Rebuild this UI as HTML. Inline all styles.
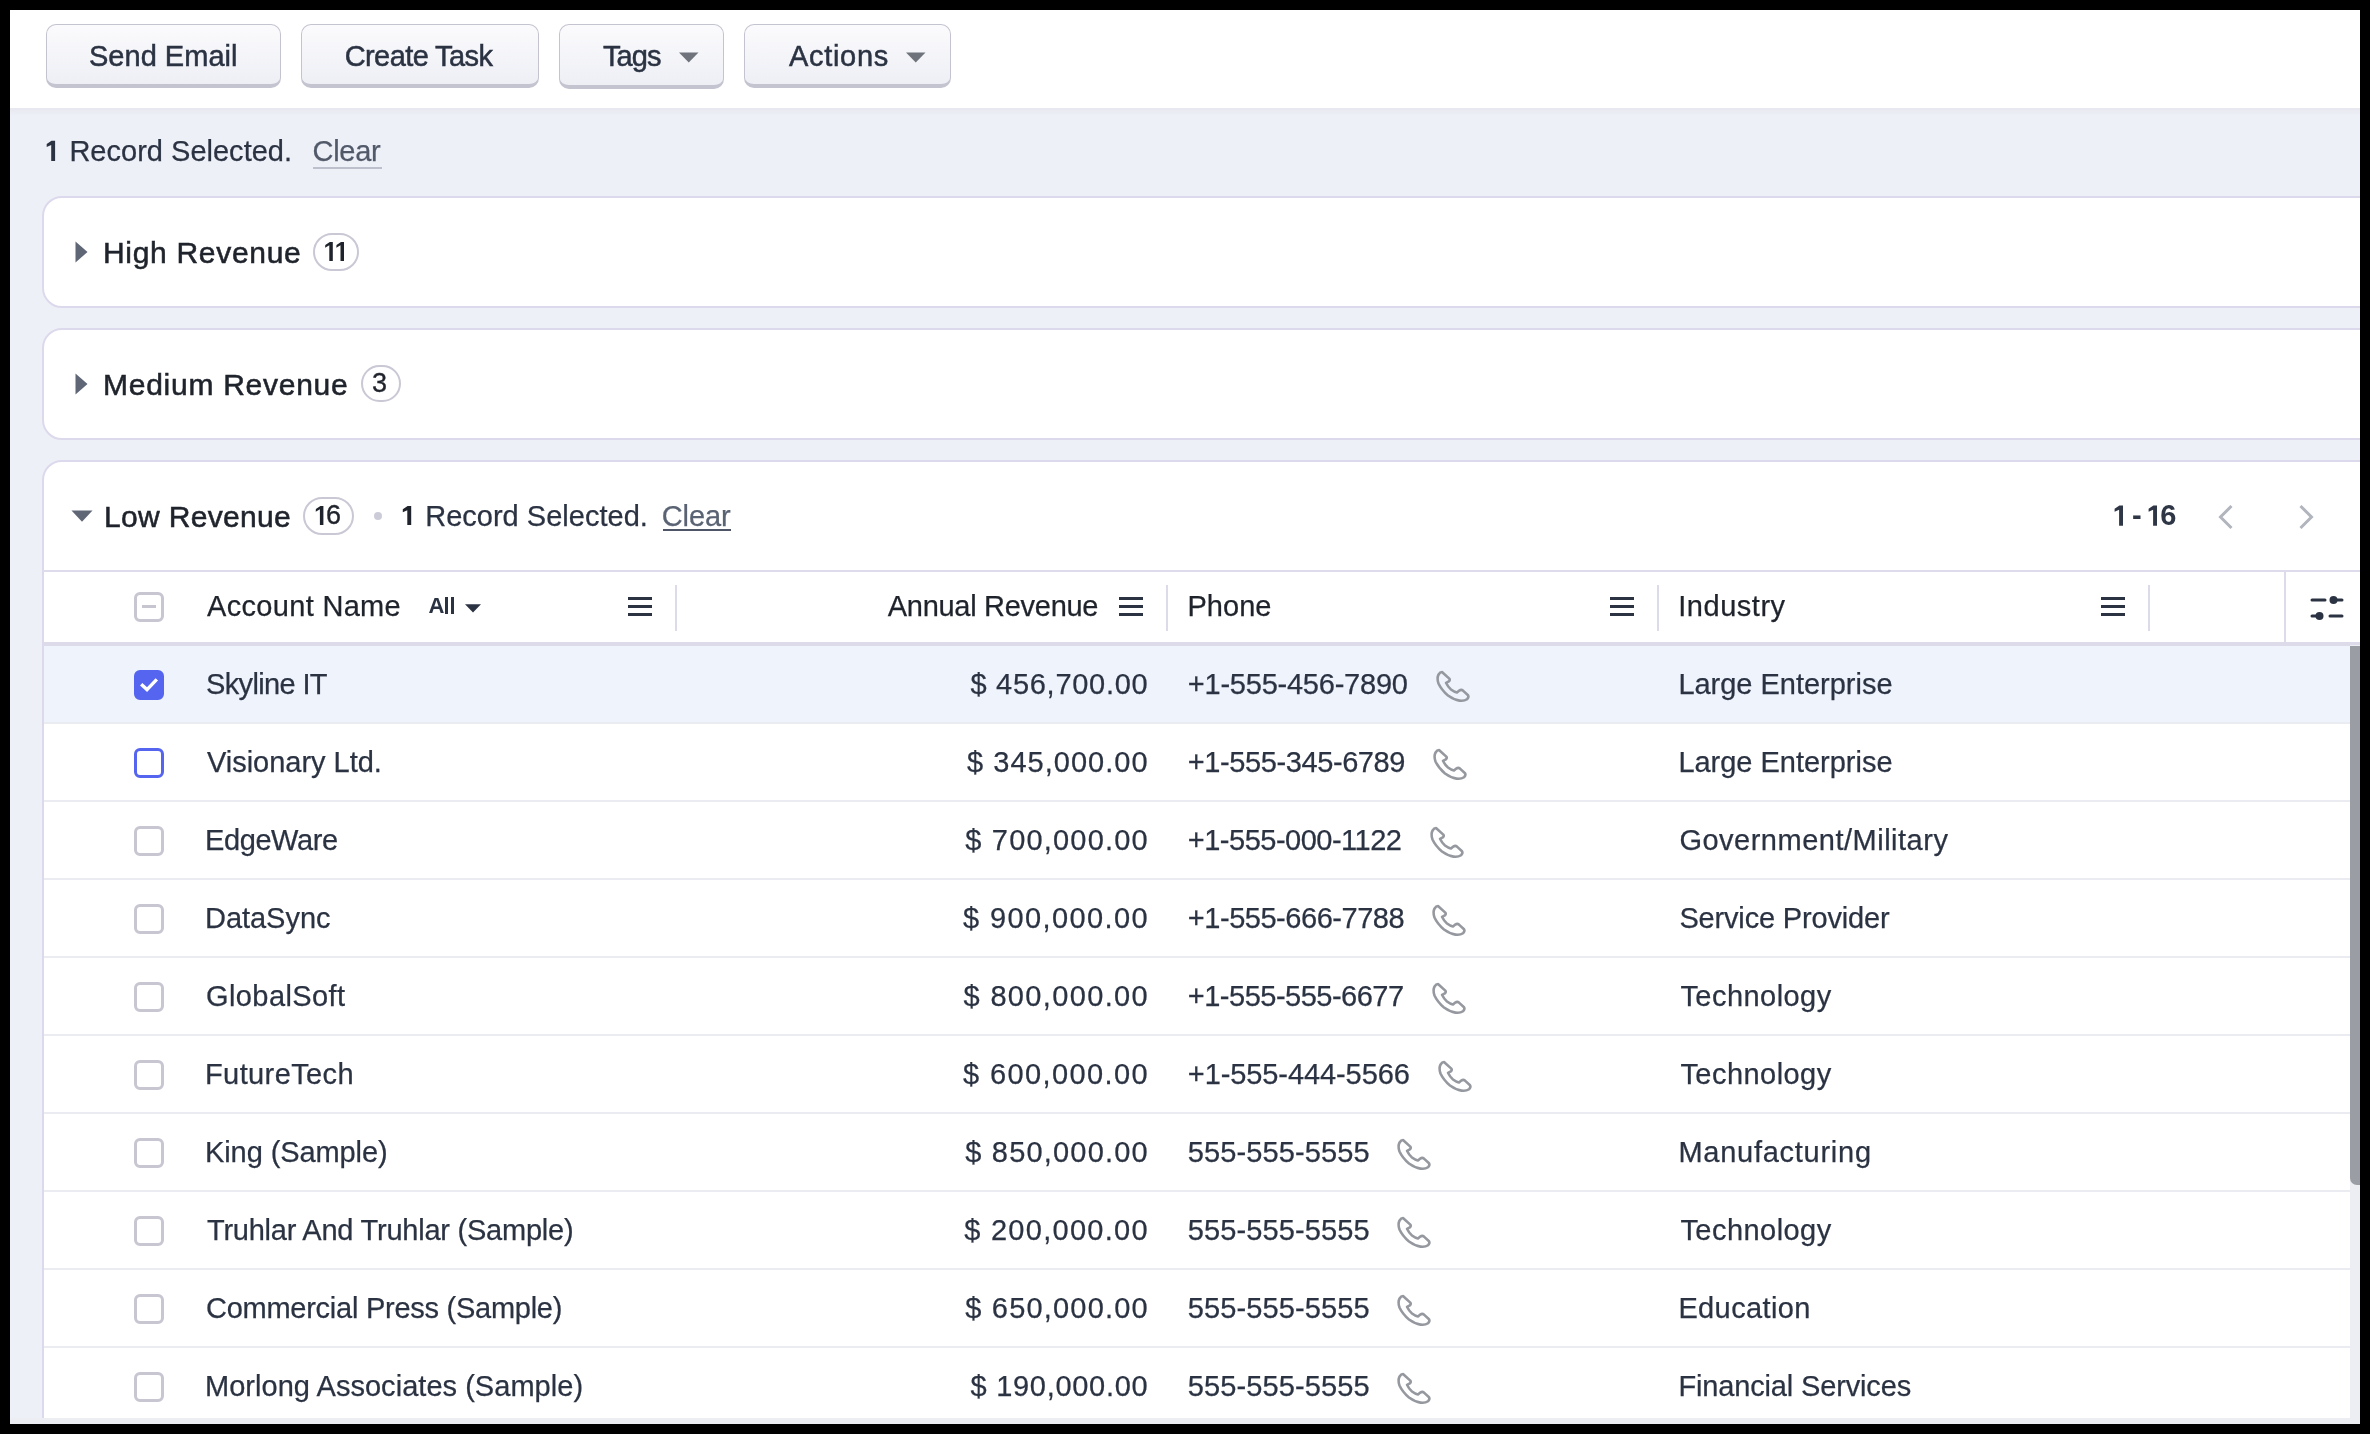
<!DOCTYPE html>
<html><head><meta charset="utf-8"><style>
html,body{margin:0;padding:0;width:2370px;height:1434px;overflow:hidden;background:#000;}
#app{position:absolute;left:10px;top:10px;width:2349.5px;height:1413.5px;background:#eef0f7;overflow:hidden;}
#top{position:absolute;left:0;top:0;width:100%;height:98px;background:#fff;}
#shade{position:absolute;left:0;top:98px;width:100%;height:8px;background:linear-gradient(#e6e7ef,#eef0f7);}
#stage{position:absolute;left:-10px;top:-10px;width:2370px;height:1434px;will-change:transform;}
.t{position:absolute;font-family:"Liberation Sans",sans-serif;line-height:1;white-space:pre;}
.btn{position:absolute;box-sizing:border-box;border:1.6px solid #c3c4cf;border-bottom-width:4px;border-radius:10px;background:linear-gradient(#fbfbfd,#eeeff5);}
.card{position:absolute;left:42px;width:2400px;box-sizing:border-box;border:2px solid #dcd9ec;border-radius:20px;background:#fff;}
.badge{position:absolute;box-sizing:border-box;border:2px solid #c9c8d4;border-radius:20px;}
.ic,.ph{position:absolute;}
.hb{position:absolute;width:24px;height:3px;background:#2b3343;box-shadow:0 8px 0 #2b3343,0 16px 0 #2b3343;}
.row{position:absolute;left:44px;width:2306px;height:76px;border-bottom:2px solid #eaecf2;}
.cb{position:absolute;box-sizing:border-box;width:30px;height:30px;border:3px solid #c7c6d1;border-radius:6px;background:#fff;}
</style></head><body>
<div id="app"><div id="top"></div><div id="shade"></div><div id="stage">
<div class="btn" style="left:46px;top:24px;width:234.5px;height:64px"></div>
<div class="btn" style="left:301.2px;top:24px;width:237.59999999999997px;height:64px"></div>
<div class="btn" style="left:559px;top:24px;width:164.5px;height:65px"></div>
<div class="btn" style="left:744px;top:24px;width:207px;height:64px"></div>
<svg class="ic" style="left:679px;top:52px" width="20" height="11" viewBox="0 0 20 11"><path d="M0 0.5 H19.5 L9.75 10.5 Z" fill="#6f737c"/></svg>
<svg class="ic" style="left:906px;top:52px" width="20" height="11" viewBox="0 0 20 11"><path d="M0 0.5 H19.5 L9.75 10.5 Z" fill="#6f737c"/></svg>
<div style="position:absolute;left:313px;top:167px;width:68.5px;height:2px;background:#bcc0cd"></div>
<div class="card" style="top:196px;height:112px"></div>
<div class="card" style="top:328px;height:112px"></div>
<div class="card" style="top:459.5px;height:2000px"></div>
<svg class="ic" style="left:75px;top:241.3px" width="13" height="22" viewBox="0 0 13 22"><path d="M0.5 0.5 L12.5 11 L0.5 21.5 Z" fill="#5f6676"/></svg>
<svg class="ic" style="left:75px;top:373.3px" width="13" height="22" viewBox="0 0 13 22"><path d="M0.5 0.5 L12.5 11 L0.5 21.5 Z" fill="#5f6676"/></svg>
<div class="badge" style="left:313.2px;top:233.2px;width:45.5px;height:37.400000000000034px"></div>
<svg class="ic" style="left:0;top:0" width="2370" height="1434"><path d="M332.8 242 L332.8 260.9 L329.3 260.9 L329.3 245.3 L325.1 247.8 L325.3 245 L329.8 242 Z" fill="#1f232b"/></svg>
<svg class="ic" style="left:0;top:0" width="2370" height="1434"><path d="M344 242 L344 260.9 L340.5 260.9 L340.5 245.3 L336.3 247.8 L336.5 245 L341 242 Z" fill="#1f232b"/></svg>
<svg class="ic" style="left:0;top:0" width="2370" height="1434"><path d="M323.4 506 L323.4 524.9 L319.9 524.9 L319.9 509.3 L315.7 511.8 L315.9 509 L320.4 506 Z" fill="#1f232b"/></svg>
<svg class="ic" style="left:0;top:0" width="2370" height="1434"><path d="M55.1 140.7 L55.1 161 L51.2 161 L51.2 145.0 L46.7 147.0 L46.7 143.89999999999998 L51.5 140.7 Z" fill="#2b3343"/></svg>
<svg class="ic" style="left:0;top:0" width="2370" height="1434"><path d="M411.2 506 L411.2 525 L407.3 525 L407.3 510.3 L402.8 512.3 L402.8 509.2 L407.59999999999997 506 Z" fill="#1f232b"/></svg>
<svg class="ic" style="left:0;top:0" width="2370" height="1434"><path d="M2123 505.5 L2123 525.7 L2119.1 525.7 L2119.1 509.8 L2114.6 511.8 L2114.6 508.7 L2119.4 505.5 Z" fill="#2f3747"/></svg>
<svg class="ic" style="left:0;top:0" width="2370" height="1434"><path d="M2157 505.5 L2157 525.7 L2153.1 525.7 L2153.1 509.8 L2148.6 511.8 L2148.6 508.7 L2153.4 505.5 Z" fill="#2f3747"/></svg>
<div class="badge" style="left:361.3px;top:365.2px;width:39.39999999999998px;height:37.19999999999999px"></div>
<div class="badge" style="left:303.2px;top:497.1px;width:50.5px;height:37.60000000000002px"></div>
<svg class="ic" style="left:70.5px;top:510px" width="22" height="12" viewBox="0 0 22 12"><path d="M0.5 0.5 H21.5 L11 11.8 Z" fill="#5f6676"/></svg>
<div style="position:absolute;left:373.7px;top:511.8px;width:8px;height:8px;border-radius:50%;background:#cbccd8"></div>
<div style="position:absolute;left:662.5px;top:528.5px;width:68.5px;height:2px;background:#4d5566"></div>
<svg class="ic" style="left:2216px;top:503px" width="20" height="28" viewBox="0 0 20 28"><path d="M15.5 3 L4.5 14 L15.5 25" fill="none" stroke="#b2b5bd" stroke-width="3"/></svg>
<svg class="ic" style="left:2296px;top:503px" width="20" height="28" viewBox="0 0 20 28"><path d="M4.5 3 L15.5 14 L4.5 25" fill="none" stroke="#b2b5bd" stroke-width="3"/></svg>
<div style="position:absolute;left:43px;top:570px;width:2400px;height:2px;background:#dedcec"></div>
<div style="position:absolute;left:43px;top:642px;width:2400px;height:4px;background:#dddbea"></div>
<div class="cb" style="left:134px;top:592px;border-color:#c7c6d1"><div style="position:absolute;left:5px;top:10.4px;width:13.8px;height:2.6px;background:#c6c5d0"></div></div>
<div style="position:absolute;left:445.2px;top:596.5px;width:2.8px;height:17.4px;background:#2b3343"></div><div style="position:absolute;left:451px;top:596.5px;width:2.8px;height:17.4px;background:#2b3343"></div>
<svg class="ic" style="left:465px;top:603.5px" width="16" height="9" viewBox="0 0 16 9"><path d="M0 0.3 H16 L8 8.5 Z" fill="#2b3343"/></svg>
<div class="hb" style="left:628px;top:597.1px"></div>
<div class="hb" style="left:1119px;top:597.1px"></div>
<div class="hb" style="left:1610px;top:597.1px"></div>
<div class="hb" style="left:2101px;top:597.1px"></div>
<div style="position:absolute;left:675px;top:584.5px;width:2px;height:46px;background:#dcdbea"></div>
<div style="position:absolute;left:1166px;top:584.5px;width:2px;height:46px;background:#dcdbea"></div>
<div style="position:absolute;left:1657px;top:584.5px;width:2px;height:46px;background:#dcdbea"></div>
<div style="position:absolute;left:2148px;top:584.5px;width:2px;height:46px;background:#dcdbea"></div>
<div style="position:absolute;left:2284px;top:571px;width:2px;height:72px;background:#dcdbea"></div>
<svg class="ic" style="left:2308px;top:592px" width="40" height="32" viewBox="0 0 40 32"><g stroke="#2b3343" stroke-width="3" stroke-linecap="round"><line x1="4" y1="8" x2="17" y2="8"/><line x1="26" y1="8" x2="34" y2="8"/><line x1="4" y1="24" x2="9" y2="24"/><line x1="22" y1="24" x2="34" y2="24"/></g><circle cx="25.5" cy="8" r="4" fill="#2b3343"/><circle cx="11.5" cy="24" r="4" fill="#2b3343"/></svg>
<div class="row" style="top:646px;background:#eff3fc"></div>
<div class="cb" style="left:134px;top:670px;background:#5565ef;border-color:#5565ef"><svg style="position:absolute;left:0;top:0" width="24" height="24" viewBox="0 0 24 24"><path d="M4.2 11.2 L10 16.6 L19.8 6.4" fill="none" stroke="#fff" stroke-width="3.4" stroke-linecap="butt" stroke-linejoin="miter"/></svg></div>
<div class="row" style="top:724px;background:#ffffff"></div>
<div class="cb" style="left:134px;top:748px;border-color:#5565ef"></div>
<div class="row" style="top:802px;background:#ffffff"></div>
<div class="cb" style="left:134px;top:826px"></div>
<div class="row" style="top:880px;background:#ffffff"></div>
<div class="cb" style="left:134px;top:904px"></div>
<div class="row" style="top:958px;background:#ffffff"></div>
<div class="cb" style="left:134px;top:982px"></div>
<div class="row" style="top:1036px;background:#ffffff"></div>
<div class="cb" style="left:134px;top:1060px"></div>
<div class="row" style="top:1114px;background:#ffffff"></div>
<div class="cb" style="left:134px;top:1138px"></div>
<div class="row" style="top:1192px;background:#ffffff"></div>
<div class="cb" style="left:134px;top:1216px"></div>
<div class="row" style="top:1270px;background:#ffffff"></div>
<div class="cb" style="left:134px;top:1294px"></div>
<div class="row" style="top:1348px;background:#ffffff"></div>
<div class="cb" style="left:134px;top:1372px"></div>
<svg class="ph" style="left:1425.6px;top:660.5px" width="55" height="50" viewBox="0 0 55 50"><path d="M16 11 L23.3 17.6 Q24.4 19 22.8 20.4 L20 21.8 Q22 26 25 28.5 Q28 30.8 31 31.5 L33.3 29.6 Q35.3 28.3 37 29.6 L42 34.2 Q43.2 36.2 41 38.2 Q38 40.3 33.5 39.6 Q28 38.8 22 34.5 Q15.5 29 12.5 22.5 Q10.6 17 12.6 13.5 Q14 11 16 11 Z" fill="none" stroke="#95989f" stroke-width="2.6" stroke-linejoin="round"/></svg>
<svg class="ph" style="left:1423.1px;top:738.5px" width="55" height="50" viewBox="0 0 55 50"><path d="M16 11 L23.3 17.6 Q24.4 19 22.8 20.4 L20 21.8 Q22 26 25 28.5 Q28 30.8 31 31.5 L33.3 29.6 Q35.3 28.3 37 29.6 L42 34.2 Q43.2 36.2 41 38.2 Q38 40.3 33.5 39.6 Q28 38.8 22 34.5 Q15.5 29 12.5 22.5 Q10.6 17 12.6 13.5 Q14 11 16 11 Z" fill="none" stroke="#95989f" stroke-width="2.6" stroke-linejoin="round"/></svg>
<svg class="ph" style="left:1419.6px;top:816.5px" width="55" height="50" viewBox="0 0 55 50"><path d="M16 11 L23.3 17.6 Q24.4 19 22.8 20.4 L20 21.8 Q22 26 25 28.5 Q28 30.8 31 31.5 L33.3 29.6 Q35.3 28.3 37 29.6 L42 34.2 Q43.2 36.2 41 38.2 Q38 40.3 33.5 39.6 Q28 38.8 22 34.5 Q15.5 29 12.5 22.5 Q10.6 17 12.6 13.5 Q14 11 16 11 Z" fill="none" stroke="#95989f" stroke-width="2.6" stroke-linejoin="round"/></svg>
<svg class="ph" style="left:1422.3px;top:894.5px" width="55" height="50" viewBox="0 0 55 50"><path d="M16 11 L23.3 17.6 Q24.4 19 22.8 20.4 L20 21.8 Q22 26 25 28.5 Q28 30.8 31 31.5 L33.3 29.6 Q35.3 28.3 37 29.6 L42 34.2 Q43.2 36.2 41 38.2 Q38 40.3 33.5 39.6 Q28 38.8 22 34.5 Q15.5 29 12.5 22.5 Q10.6 17 12.6 13.5 Q14 11 16 11 Z" fill="none" stroke="#95989f" stroke-width="2.6" stroke-linejoin="round"/></svg>
<svg class="ph" style="left:1421.8px;top:972.5px" width="55" height="50" viewBox="0 0 55 50"><path d="M16 11 L23.3 17.6 Q24.4 19 22.8 20.4 L20 21.8 Q22 26 25 28.5 Q28 30.8 31 31.5 L33.3 29.6 Q35.3 28.3 37 29.6 L42 34.2 Q43.2 36.2 41 38.2 Q38 40.3 33.5 39.6 Q28 38.8 22 34.5 Q15.5 29 12.5 22.5 Q10.6 17 12.6 13.5 Q14 11 16 11 Z" fill="none" stroke="#95989f" stroke-width="2.6" stroke-linejoin="round"/></svg>
<svg class="ph" style="left:1427.5px;top:1050.5px" width="55" height="50" viewBox="0 0 55 50"><path d="M16 11 L23.3 17.6 Q24.4 19 22.8 20.4 L20 21.8 Q22 26 25 28.5 Q28 30.8 31 31.5 L33.3 29.6 Q35.3 28.3 37 29.6 L42 34.2 Q43.2 36.2 41 38.2 Q38 40.3 33.5 39.6 Q28 38.8 22 34.5 Q15.5 29 12.5 22.5 Q10.6 17 12.6 13.5 Q14 11 16 11 Z" fill="none" stroke="#95989f" stroke-width="2.6" stroke-linejoin="round"/></svg>
<svg class="ph" style="left:1387.4px;top:1128.5px" width="55" height="50" viewBox="0 0 55 50"><path d="M16 11 L23.3 17.6 Q24.4 19 22.8 20.4 L20 21.8 Q22 26 25 28.5 Q28 30.8 31 31.5 L33.3 29.6 Q35.3 28.3 37 29.6 L42 34.2 Q43.2 36.2 41 38.2 Q38 40.3 33.5 39.6 Q28 38.8 22 34.5 Q15.5 29 12.5 22.5 Q10.6 17 12.6 13.5 Q14 11 16 11 Z" fill="none" stroke="#95989f" stroke-width="2.6" stroke-linejoin="round"/></svg>
<svg class="ph" style="left:1387.4px;top:1206.5px" width="55" height="50" viewBox="0 0 55 50"><path d="M16 11 L23.3 17.6 Q24.4 19 22.8 20.4 L20 21.8 Q22 26 25 28.5 Q28 30.8 31 31.5 L33.3 29.6 Q35.3 28.3 37 29.6 L42 34.2 Q43.2 36.2 41 38.2 Q38 40.3 33.5 39.6 Q28 38.8 22 34.5 Q15.5 29 12.5 22.5 Q10.6 17 12.6 13.5 Q14 11 16 11 Z" fill="none" stroke="#95989f" stroke-width="2.6" stroke-linejoin="round"/></svg>
<svg class="ph" style="left:1387.4px;top:1284.5px" width="55" height="50" viewBox="0 0 55 50"><path d="M16 11 L23.3 17.6 Q24.4 19 22.8 20.4 L20 21.8 Q22 26 25 28.5 Q28 30.8 31 31.5 L33.3 29.6 Q35.3 28.3 37 29.6 L42 34.2 Q43.2 36.2 41 38.2 Q38 40.3 33.5 39.6 Q28 38.8 22 34.5 Q15.5 29 12.5 22.5 Q10.6 17 12.6 13.5 Q14 11 16 11 Z" fill="none" stroke="#95989f" stroke-width="2.6" stroke-linejoin="round"/></svg>
<svg class="ph" style="left:1387.4px;top:1362.5px" width="55" height="50" viewBox="0 0 55 50"><path d="M16 11 L23.3 17.6 Q24.4 19 22.8 20.4 L20 21.8 Q22 26 25 28.5 Q28 30.8 31 31.5 L33.3 29.6 Q35.3 28.3 37 29.6 L42 34.2 Q43.2 36.2 41 38.2 Q38 40.3 33.5 39.6 Q28 38.8 22 34.5 Q15.5 29 12.5 22.5 Q10.6 17 12.6 13.5 Q14 11 16 11 Z" fill="none" stroke="#95989f" stroke-width="2.6" stroke-linejoin="round"/></svg>
<div style="position:absolute;left:2350px;top:645px;width:9.5px;height:780px;background:#eceef4"></div>
<div style="position:absolute;left:2350px;top:645.5px;width:9.5px;height:539px;background:#9a9da3;border-bottom-left-radius:7px"></div>
<div style="position:absolute;left:10px;top:1418px;width:2350px;height:6px;background:#eceef4"></div>
<span class="t" style="left:89.00px;top:41.75px;font-size:29px;font-weight:400;color:#2b3343;letter-spacing:0.016px;-webkit-text-stroke:0.5px #2b3343;">Send Email</span>
<span class="t" style="left:344.70px;top:41.75px;font-size:29px;font-weight:400;color:#2b3343;letter-spacing:-0.593px;-webkit-text-stroke:0.5px #2b3343;">Create Task</span>
<span class="t" style="left:603.00px;top:41.75px;font-size:29px;font-weight:400;color:#2b3343;letter-spacing:-0.919px;-webkit-text-stroke:0.5px #2b3343;">Tags</span>
<span class="t" style="left:789.00px;top:41.75px;font-size:29px;font-weight:400;color:#2b3343;letter-spacing:0.683px;-webkit-text-stroke:0.5px #2b3343;">Actions</span>
<span class="t" style="left:69.40px;top:136.65px;font-size:29px;font-weight:400;color:#2b3343;letter-spacing:0.013px;-webkit-text-stroke:0.25px #2b3343;">Record Selected.</span>
<span class="t" style="left:312.50px;top:136.65px;font-size:29px;font-weight:400;color:#525a6a;letter-spacing:-0.286px;-webkit-text-stroke:0.25px #525a6a;">Clear</span>
<span class="t" style="left:103.00px;top:238.00px;font-size:30px;font-weight:400;color:#1f232b;letter-spacing:0.688px;-webkit-text-stroke:0.55px #1f232b;">High Revenue</span>
<span class="t" style="left:103.00px;top:370.00px;font-size:30px;font-weight:400;color:#1f232b;letter-spacing:0.736px;-webkit-text-stroke:0.55px #1f232b;">Medium Revenue</span>
<span class="t" style="left:372.10px;top:370.14px;font-size:27px;font-weight:400;color:#1f232b;letter-spacing:0.000px;-webkit-text-stroke:0.35px #1f232b;">3</span>
<span class="t" style="left:104.00px;top:502.21px;font-size:30px;font-weight:400;color:#1f232b;letter-spacing:0.323px;-webkit-text-stroke:0.55px #1f232b;">Low Revenue</span>
<span class="t" style="left:326.00px;top:502.04px;font-size:27px;font-weight:400;color:#1f232b;letter-spacing:0.000px;-webkit-text-stroke:0.35px #1f232b;">6</span>
<span class="t" style="left:425.20px;top:501.75px;font-size:29px;font-weight:400;color:#2b3343;letter-spacing:0.013px;-webkit-text-stroke:0.25px #2b3343;">Record Selected.</span>
<span class="t" style="left:661.70px;top:501.75px;font-size:29px;font-weight:400;color:#5a6373;letter-spacing:-0.086px;-webkit-text-stroke:0.25px #5a6373;">Clear</span>
<span class="t" style="left:2132.00px;top:501.15px;font-size:29px;font-weight:700;color:#2f3747;letter-spacing:0.000px;">-</span>
<span class="t" style="left:2160.20px;top:501.15px;font-size:29px;font-weight:700;color:#2f3747;letter-spacing:0.000px;">6</span>
<span class="t" style="left:207.00px;top:592.45px;font-size:29px;font-weight:400;color:#1f232b;letter-spacing:0.321px;-webkit-text-stroke:0.25px #1f232b;">Account Name</span>
<span class="t" style="left:428.40px;top:595.28px;font-size:22px;font-weight:700;color:#2b3343;letter-spacing:0.000px;">A</span>
<span class="t" style="left:887.80px;top:592.45px;font-size:29px;font-weight:400;color:#1f232b;letter-spacing:-0.293px;-webkit-text-stroke:0.25px #1f232b;">Annual Revenue</span>
<span class="t" style="left:1187.50px;top:592.45px;font-size:29px;font-weight:400;color:#1f232b;letter-spacing:0.018px;-webkit-text-stroke:0.25px #1f232b;">Phone</span>
<span class="t" style="left:1678.30px;top:592.45px;font-size:29px;font-weight:400;color:#1f232b;letter-spacing:0.520px;-webkit-text-stroke:0.25px #1f232b;">Industry</span>
<span class="t" style="left:206.00px;top:669.75px;font-size:29px;font-weight:400;color:#2b3343;letter-spacing:-0.644px;-webkit-text-stroke:0.25px #2b3343;">Skyline IT</span>
<span class="t" style="left:970.50px;top:669.75px;font-size:29px;font-weight:400;color:#2b3343;letter-spacing:0.709px;-webkit-text-stroke:0.25px #2b3343;">$ 456,700.00</span>
<span class="t" style="left:1187.80px;top:669.75px;font-size:29px;font-weight:400;color:#2b3343;letter-spacing:-0.228px;-webkit-text-stroke:0.25px #2b3343;">+1-555-456-7890</span>
<span class="t" style="left:1678.40px;top:669.75px;font-size:29px;font-weight:400;color:#2b3343;letter-spacing:-0.018px;-webkit-text-stroke:0.25px #2b3343;">Large Enterprise</span>
<span class="t" style="left:207.00px;top:747.75px;font-size:29px;font-weight:400;color:#2b3343;letter-spacing:-0.024px;-webkit-text-stroke:0.25px #2b3343;">Visionary Ltd.</span>
<span class="t" style="left:967.00px;top:747.75px;font-size:29px;font-weight:400;color:#2b3343;letter-spacing:1.027px;-webkit-text-stroke:0.25px #2b3343;">$ 345,000.00</span>
<span class="t" style="left:1187.80px;top:747.75px;font-size:29px;font-weight:400;color:#2b3343;letter-spacing:-0.407px;-webkit-text-stroke:0.25px #2b3343;">+1-555-345-6789</span>
<span class="t" style="left:1678.40px;top:747.75px;font-size:29px;font-weight:400;color:#2b3343;letter-spacing:-0.018px;-webkit-text-stroke:0.25px #2b3343;">Large Enterprise</span>
<span class="t" style="left:205.00px;top:825.75px;font-size:29px;font-weight:400;color:#2b3343;letter-spacing:-0.401px;-webkit-text-stroke:0.25px #2b3343;">EdgeWare</span>
<span class="t" style="left:965.30px;top:825.75px;font-size:29px;font-weight:400;color:#2b3343;letter-spacing:1.182px;-webkit-text-stroke:0.25px #2b3343;">$ 700,000.00</span>
<span class="t" style="left:1187.80px;top:825.75px;font-size:29px;font-weight:400;color:#2b3343;letter-spacing:-0.503px;-webkit-text-stroke:0.25px #2b3343;">+1-555-000-1122</span>
<span class="t" style="left:1679.40px;top:825.75px;font-size:29px;font-weight:400;color:#2b3343;letter-spacing:0.502px;-webkit-text-stroke:0.25px #2b3343;">Government/Military</span>
<span class="t" style="left:205.00px;top:903.75px;font-size:29px;font-weight:400;color:#2b3343;letter-spacing:-0.033px;-webkit-text-stroke:0.25px #2b3343;">DataSync</span>
<span class="t" style="left:963.10px;top:903.75px;font-size:29px;font-weight:400;color:#2b3343;letter-spacing:1.382px;-webkit-text-stroke:0.25px #2b3343;">$ 900,000.00</span>
<span class="t" style="left:1187.80px;top:903.75px;font-size:29px;font-weight:400;color:#2b3343;letter-spacing:-0.464px;-webkit-text-stroke:0.25px #2b3343;">+1-555-666-7788</span>
<span class="t" style="left:1679.40px;top:903.75px;font-size:29px;font-weight:400;color:#2b3343;letter-spacing:-0.166px;-webkit-text-stroke:0.25px #2b3343;">Service Provider</span>
<span class="t" style="left:206.00px;top:981.75px;font-size:29px;font-weight:400;color:#2b3343;letter-spacing:0.405px;-webkit-text-stroke:0.25px #2b3343;">GlobalSoft</span>
<span class="t" style="left:963.50px;top:981.75px;font-size:29px;font-weight:400;color:#2b3343;letter-spacing:1.346px;-webkit-text-stroke:0.25px #2b3343;">$ 800,000.00</span>
<span class="t" style="left:1187.80px;top:981.75px;font-size:29px;font-weight:400;color:#2b3343;letter-spacing:-0.499px;-webkit-text-stroke:0.25px #2b3343;">+1-555-555-6677</span>
<span class="t" style="left:1680.40px;top:981.75px;font-size:29px;font-weight:400;color:#2b3343;letter-spacing:0.454px;-webkit-text-stroke:0.25px #2b3343;">Technology</span>
<span class="t" style="left:205.00px;top:1059.75px;font-size:29px;font-weight:400;color:#2b3343;letter-spacing:0.395px;-webkit-text-stroke:0.25px #2b3343;">FutureTech</span>
<span class="t" style="left:963.10px;top:1059.75px;font-size:29px;font-weight:400;color:#2b3343;letter-spacing:1.382px;-webkit-text-stroke:0.25px #2b3343;">$ 600,000.00</span>
<span class="t" style="left:1187.80px;top:1059.75px;font-size:29px;font-weight:400;color:#2b3343;letter-spacing:-0.092px;-webkit-text-stroke:0.25px #2b3343;">+1-555-444-5566</span>
<span class="t" style="left:1680.40px;top:1059.75px;font-size:29px;font-weight:400;color:#2b3343;letter-spacing:0.454px;-webkit-text-stroke:0.25px #2b3343;">Technology</span>
<span class="t" style="left:205.00px;top:1137.75px;font-size:29px;font-weight:400;color:#2b3343;letter-spacing:-0.090px;-webkit-text-stroke:0.25px #2b3343;">King (Sample)</span>
<span class="t" style="left:965.30px;top:1137.75px;font-size:29px;font-weight:400;color:#2b3343;letter-spacing:1.182px;-webkit-text-stroke:0.25px #2b3343;">$ 850,000.00</span>
<span class="t" style="left:1187.80px;top:1137.75px;font-size:29px;font-weight:400;color:#2b3343;letter-spacing:0.121px;-webkit-text-stroke:0.25px #2b3343;">555-555-5555</span>
<span class="t" style="left:1678.40px;top:1137.75px;font-size:29px;font-weight:400;color:#2b3343;letter-spacing:0.738px;-webkit-text-stroke:0.25px #2b3343;">Manufacturing</span>
<span class="t" style="left:207.00px;top:1215.75px;font-size:29px;font-weight:400;color:#2b3343;letter-spacing:-0.234px;-webkit-text-stroke:0.25px #2b3343;">Truhlar And Truhlar (Sample)</span>
<span class="t" style="left:964.20px;top:1215.75px;font-size:29px;font-weight:400;color:#2b3343;letter-spacing:1.282px;-webkit-text-stroke:0.25px #2b3343;">$ 200,000.00</span>
<span class="t" style="left:1187.80px;top:1215.75px;font-size:29px;font-weight:400;color:#2b3343;letter-spacing:0.121px;-webkit-text-stroke:0.25px #2b3343;">555-555-5555</span>
<span class="t" style="left:1680.40px;top:1215.75px;font-size:29px;font-weight:400;color:#2b3343;letter-spacing:0.454px;-webkit-text-stroke:0.25px #2b3343;">Technology</span>
<span class="t" style="left:206.00px;top:1293.75px;font-size:29px;font-weight:400;color:#2b3343;letter-spacing:-0.259px;-webkit-text-stroke:0.25px #2b3343;">Commercial Press (Sample)</span>
<span class="t" style="left:965.30px;top:1293.75px;font-size:29px;font-weight:400;color:#2b3343;letter-spacing:1.182px;-webkit-text-stroke:0.25px #2b3343;">$ 650,000.00</span>
<span class="t" style="left:1187.80px;top:1293.75px;font-size:29px;font-weight:400;color:#2b3343;letter-spacing:0.121px;-webkit-text-stroke:0.25px #2b3343;">555-555-5555</span>
<span class="t" style="left:1678.40px;top:1293.75px;font-size:29px;font-weight:400;color:#2b3343;letter-spacing:0.380px;-webkit-text-stroke:0.25px #2b3343;">Education</span>
<span class="t" style="left:205.00px;top:1371.75px;font-size:29px;font-weight:400;color:#2b3343;letter-spacing:0.035px;-webkit-text-stroke:0.25px #2b3343;">Morlong Associates (Sample)</span>
<span class="t" style="left:970.60px;top:1371.75px;font-size:29px;font-weight:400;color:#2b3343;letter-spacing:0.700px;-webkit-text-stroke:0.25px #2b3343;">$ 190,000.00</span>
<span class="t" style="left:1187.80px;top:1371.75px;font-size:29px;font-weight:400;color:#2b3343;letter-spacing:0.121px;-webkit-text-stroke:0.25px #2b3343;">555-555-5555</span>
<span class="t" style="left:1678.40px;top:1371.75px;font-size:29px;font-weight:400;color:#2b3343;letter-spacing:-0.148px;-webkit-text-stroke:0.25px #2b3343;">Financial Services</span>
</div></div>
</body></html>
